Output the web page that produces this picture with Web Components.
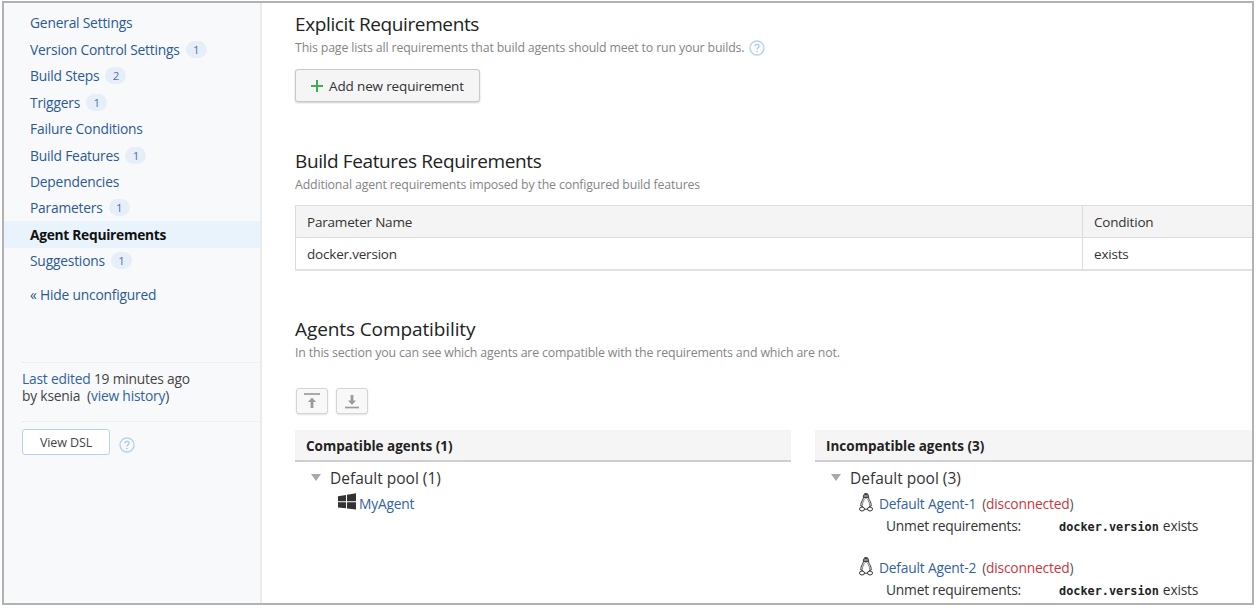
<!DOCTYPE html>
<html><head><meta charset="utf-8"><title>Agent Requirements</title>
<style>
html,body{margin:0;padding:0;background:#fff;overflow:hidden}
body{font-family:"Open Sans","Noto Sans",sans-serif;font-size:13.8px;letter-spacing:-.2px;color:#333;width:1256px;height:608px}
</style></head><body>
<template id="help-t"><style>:host{display:inline-flex;vertical-align:middle}svg{display:block}</style>
<svg width="16" height="16" viewBox="0 0 16 16" fill="none"><circle cx="8" cy="8" r="7" stroke="#b5d3ec" stroke-width="1.3"/><path d="M5.900 6.300C6 5 6.900 4.400 8 4.400c1.200 0 2.100.7 2.100 1.800 0 1.500-2.100 1.600-2.100 3.300" stroke="#a5c8e6" stroke-width="1.200"/><circle cx="8" cy="11.600" r=".8" fill="#a5c8e6"/></svg></template>

<template id="frame-t"><style>:host{display:flex;box-sizing:border-box;margin:1px 2px 0 2px;width:1252px;height:604px;border:2px solid #b2b2b2;overflow:hidden;background:#fff}</style><slot name="side"></slot><slot name="main"></slot></template>

<template id="nav-t"><style>
:host{display:flex;flex-direction:column;box-sizing:border-box;width:258px;flex:none;background:#f7f9fb;border-right:2px solid #e9ebed;padding-top:6.6px}
.foot{margin:57.4px 0 0 18px}
.hr{border-top:1px dotted #e6e8ea}
.info{padding:7px 0 17px;line-height:17px;color:#444}
.info a{color:#33639e}
.row{display:flex;align-items:center;gap:9px;padding-top:7px}
.row x-help{margin-top:5px}
.hide{color:#2c5a94;padding:11px 0 0 26px;line-height:20px}
button{font:inherit;font-size:12.5px;letter-spacing:-.1px;color:#444;width:88px;height:26px;padding:0;background:#fff;border:1px solid #b4d2ea;border-radius:3px}
</style>
<slot></slot>
<div class="hide">« Hide unconfigured</div>
<div class="foot"><div class="hr"></div>
<div class="info"><a>Last edited</a> 19 minutes ago<br>by ksenia&nbsp; (<a>view history</a>)</div>
<div class="hr"></div>
<div class="row"><button>View DSL</button><x-help></x-help></div></div></template>

<template id="item-t"><style>
:host{display:flex;align-items:center;gap:6px;height:26.45px;padding-left:26px;color:#2c5a94}
:host([active]){background:#e9f3fb;color:#111;font-weight:700;letter-spacing:-.3px}
.b{display:inline-flex;align-items:center;justify-content:center;width:21px;height:17px;border-radius:9px;background:#e6eff8;color:#4a76ad;font-size:11.5px}
.b:empty{display:none}
</style><slot></slot><span class="b"></span></template>

<template id="main-t"><style>:host{display:block;flex:1;min-width:0;padding:8px 0 0 33px}</style><slot></slot></template>

<template id="sec-t"><style>
:host{display:block}
h2{margin:0;font-weight:400;font-size:19px;letter-spacing:-.38px;line-height:26px;color:#222}
:host([wide]) h2{letter-spacing:-.1px}
p{margin:0;font-size:12.35px;letter-spacing:-.16px;line-height:17px;color:#858585;padding-top:2px;display:flex;align-items:center;gap:5px}
</style><h2></h2><p><span class="s"></span><slot name="help"></slot></p><slot></slot></template>

<template id="btn-t"><style>
:host{display:inline-flex;align-items:center;justify-content:center;box-sizing:border-box;background:#f5f5f5;border:1px solid #c9c9c9;border-radius:3px;box-shadow:0 1px 2px rgba(0,0,0,.2);color:#333}
:host([soft]){background:#f8f8f8;border-color:#d4d4d4;box-shadow:0 1px 2px rgba(0,0,0,.12)}
</style><slot></slot></template>

<template id="tbl-t"><style>
:host{display:block;margin-top:12px;font-size:13.5px}
table{border-collapse:collapse;table-layout:fixed;width:calc(100% + 2px)}
td{border:1px solid #dcdcdc;height:32px;padding:0 0 0 11px;box-sizing:border-box;color:#333}
tr:first-child td{background:#f4f4f4;height:32px}
tr:last-child td{border-bottom:2px solid #e2e2e2;padding-top:2px}
</style><table><colgroup><col style="width:787px"><col></colgroup>
<tr><td>Parameter Name</td><td>Condition</td></tr><tr><td>docker.version</td><td>exists</td></tr></table></template>

<template id="col-t"><style>
:host{display:block;box-sizing:border-box}
.h{height:32px;box-sizing:border-box;background:#f5f5f5;border-bottom:2px solid #cfcfcf;font-weight:700;padding-left:11px;line-height:32px;color:#222;font-size:13.5px;letter-spacing:0}
.p{display:flex;align-items:center;height:20px;margin:6px 0 0 16px;font-size:15.5px;letter-spacing:0;gap:9px;color:#333}
.p svg{flex:none}
</style><div class="h"></div><div class="p"><svg width="10" height="7" viewBox="0 0 10 7"><path d="M0 0h10L5 7z" fill="#a9a9a9"/></svg><span class="t"></span></div><slot></slot></template>

<template id="agent-t"><style>
:host{display:block;padding-left:43px}
.a{display:flex;align-items:center;gap:6px;height:20px;margin-top:6px}
:host([os=win]) .a{gap:3px}
:host([os=win]) .ic{margin-bottom:5px}
:host([os=linux]) .ic{margin:0 0 2px 1px}
.a a{color:#33639e}
i{font-style:normal;color:#555}.r{color:#c8383c}
.u{display:flex;height:18px;align-items:center;padding:3px 0 0 28px}
.u span:first-child{width:173px}
code{font:700 11.85px "DejaVu Sans Mono",monospace;letter-spacing:0;color:#222;margin-right:4px}
:host([gap]){padding-bottom:17px}
svg{flex:none;display:block}
</style><div class="a"><span class="ic"></span><a class="n"></a><span class="st"></span></div><div class="u"></div></template>

<x-frame>
<x-nav slot="side">
<x-item>General Settings</x-item><x-item badge="1">Version Control Settings</x-item><x-item badge="2">Build Steps</x-item><x-item badge="1">Triggers</x-item><x-item>Failure Conditions</x-item><x-item badge="1">Build Features</x-item><x-item>Dependencies</x-item><x-item badge="1">Parameters</x-item><x-item active>Agent Requirements</x-item><x-item badge="1">Suggestions</x-item>
</x-nav>
<x-main slot="main">
<x-sec title="Explicit Requirements" sub="This page lists all requirements that build agents should meet to run your builds."><x-help slot="help"></x-help>
<x-btn style="display:flex;width:185px;height:33px;margin-top:13px;gap:6px"><svg width="12" height="12" viewBox="0 0 12 12"><path d="M6 0v12M0 6h12" stroke="#3fae56" stroke-width="2"/></svg><span style="font-size:13.5px;letter-spacing:-.15px">Add new requirement</span></x-btn></x-sec>
<div style="height:46px"></div>
<x-sec title="Build Features Requirements" sub="Additional agent requirements imposed by the configured build features"><x-tbl></x-tbl></x-sec>
<div style="height:45px"></div>
<x-sec wide title="Agents Compatibility" sub="In this section you can see which agents are compatible with the requirements and which are not.">
<x-bar></x-bar>
<x-cols>
<x-col title="Compatible agents (1)" pool="Default pool (1)"><x-agent os="win" name="MyAgent"></x-agent></x-col>
<x-col title="Incompatible agents (3)" pool="Default pool (3)"><x-agent os="linux" gap name="Default Agent-1" off></x-agent><x-agent os="linux" name="Default Agent-2" off></x-agent></x-col>
</x-cols>
</x-sec>
</x-main>
</x-frame>

<script>
const tpl=(id,el)=>{const r=el.attachShadow({mode:'open'});r.appendChild(document.getElementById(id).content.cloneNode(true));return r};
const simple=(tag,id)=>customElements.define(tag,class extends HTMLElement{constructor(){super();tpl(id,this)}});
simple('x-help','help-t');simple('x-frame','frame-t');simple('x-nav','nav-t');simple('x-main','main-t');simple('x-btn','btn-t');simple('x-tbl','tbl-t');
customElements.define('x-item',class extends HTMLElement{connectedCallback(){if(this.shadowRoot)return;const r=tpl('item-t',this);r.querySelector('.b').textContent=this.getAttribute('badge')||''}});
customElements.define('x-sec',class extends HTMLElement{connectedCallback(){if(this.shadowRoot)return;const r=tpl('sec-t',this);r.querySelector('h2').textContent=this.getAttribute('title');r.querySelector('.s').textContent=this.getAttribute('sub');this.removeAttribute('title')}});
customElements.define('x-col',class extends HTMLElement{connectedCallback(){if(this.shadowRoot)return;const r=tpl('col-t',this);r.querySelector('.h').textContent=this.getAttribute('title');r.querySelector('.t').textContent=this.getAttribute('pool');this.removeAttribute('title')}});
customElements.define('x-bar',class extends HTMLElement{constructor(){super();this.attachShadow({mode:'open'}).innerHTML=`<style>:host{display:flex;gap:8px;margin:27px 0 16px 1px}x-btn{width:32px;height:26px}</style>
<x-btn soft><svg width="18" height="16" viewBox="0 0 18 16"><path d="M1 1h16" stroke="#9c9c9c" stroke-width="1.700"/><path d="M9 4.500l4 4.500H10.400v6H7.600V9H5z" fill="#9c9c9c"/></svg></x-btn>
<x-btn soft><svg width="18" height="16" viewBox="0 0 18 16"><path d="M2 14.500h14" stroke="#9c9c9c" stroke-width="1.700"/><path d="M9 12L5 7.500H7.600V2h2.800v5.500H13z" fill="#9c9c9c"/></svg></x-btn>`}});
customElements.define('x-cols',class extends HTMLElement{constructor(){super();this.attachShadow({mode:'open'}).innerHTML=`<style>:host{display:grid;grid-template-columns:496px 1fr;column-gap:24px}</style><slot></slot>`}});
const WIN='<svg width="18" height="17" viewBox="0 0 18 17"><path d="M0 3.200l8-1.200v6.300H0zM9 1.800L18 .3v8H9zM0 9.300h8v6L0 14.400zM9 9.300h9v7.300l-9-1.200z" fill="#333"/></svg>';
const TUX='<svg width="14" height="19" viewBox="0 0 14 19"><path d="M7 .5C5 .5 4.300 2.200 4.400 4c.1 1.500-.4 2.300-1.200 3.700C2.200 9.300 1.600 11 1.900 13h1.200c.5 1.700 1.900 3.300 3.900 3.300s3.400-1.600 3.900-3.300h1.200c.3-2-.3-3.700-1.300-5.300C10 6.300 9.500 5.500 9.600 4 9.700 2.200 9 .5 7 .5z" fill="#fff" stroke="#333" stroke-width="1"/><path d="M7 .5C5 .5 4.300 2.200 4.400 4.800c.8.500 1.600.8 2.600.8s1.800-.3 2.600-.8C9.700 2.200 9 .5 7 .5z" fill="#444"/><path d="M5.500 6.300C4.200 8 3.400 10 3.500 12.500M8.500 6.300c1.300 1.700 2.100 3.700 2 6.200" fill="none" stroke="#555" stroke-width=".8"/><circle cx="6" cy="3" r=".7" fill="#fff"/><circle cx="8" cy="3" r=".7" fill="#fff"/><ellipse cx="3" cy="16" rx="2.500" ry="2" fill="#fff" stroke="#333" stroke-width="1"/><ellipse cx="11" cy="16" rx="2.500" ry="2" fill="#fff" stroke="#333" stroke-width="1"/></svg>';
customElements.define('x-agent',class extends HTMLElement{connectedCallback(){if(this.shadowRoot)return;const r=tpl('agent-t',this);
r.querySelector('.ic').innerHTML=this.getAttribute('os')=='win'?WIN:TUX;r.querySelector('.n').textContent=this.getAttribute('name');
if(this.hasAttribute('off')){r.querySelector('.st').innerHTML='<i>(</i><span class="r">disconnected</span><i>)</i>';r.querySelector('.u').innerHTML='<span>Unmet requirements:</span><span><code>docker.version</code>exists</span>'}}});
</script>
</body></html>
